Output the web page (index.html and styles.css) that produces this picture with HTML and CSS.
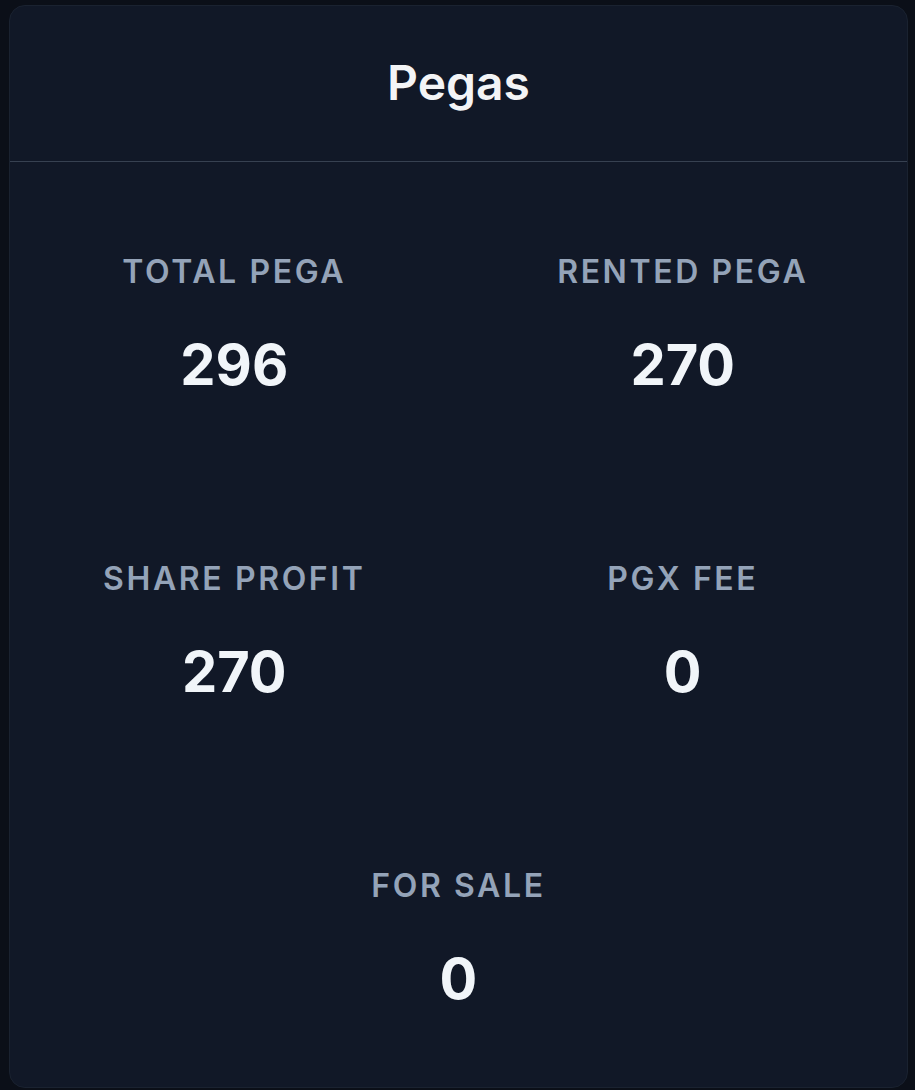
FILE: index.html
```html
<!DOCTYPE html>
<html>
<head>
<meta charset="utf-8">
<link rel="stylesheet" href="styles.css">
</head>
<body>
<div class="card">
  <div class="card-header">
    <h2 class="title">Pegas</h2>
  </div>
  <div class="stats">
    <div class="stat">
      <div class="label">TOTAL PEGA</div>
      <div class="value">296</div>
    </div>
    <div class="stat">
      <div class="label">RENTED PEGA</div>
      <div class="value">270</div>
    </div>
    <div class="stat">
      <div class="label">SHARE PROFIT</div>
      <div class="value">270</div>
    </div>
    <div class="stat">
      <div class="label">PGX FEE</div>
      <div class="value">0</div>
    </div>
    <div class="stat stat-wide">
      <div class="label">FOR SALE</div>
      <div class="value">0</div>
    </div>
  </div>
</div>
</body>
</html>
```

FILE: styles.css
```css
html, body {
  margin: 0;
  padding: 0;
  background: #0b0f18;
  font-family: Inter, "Noto Sans", sans-serif;
}

.card {
  margin: 5px 0 0 9px;
  width: 899px;
  height: 1083px;
  box-sizing: border-box;
  background: #111827;
  border: 1px solid #1a2230;
  border-radius: 16px;
  overflow: hidden;
}

.card-header {
  height: 156px;
  box-sizing: border-box;
  border-bottom: 1px solid #374151;
  display: flex;
  align-items: center;
  justify-content: center;
}

.title {
  margin: 0;
  font-size: 48px;
  line-height: 56px;
  font-weight: 600;
  color: #f3f4f6;
  padding-bottom: 2px;
}

.stats {
  display: grid;
  grid-template-columns: 1fr 1fr;
  row-gap: 164px;
  padding-top: 92px;
}

.stat {
  display: flex;
  flex-direction: column;
  align-items: center;
  gap: 43px;
}

.stat-wide {
  grid-column: 1 / span 2;
}

.label {
  font-size: 32px;
  line-height: 36px;
  font-weight: 600;
  letter-spacing: 2.6px;
  color: #94a3b8;
}

.value {
  font-size: 56px;
  line-height: 64px;
  font-weight: 700;
  color: #f1f5f9;
}
```
